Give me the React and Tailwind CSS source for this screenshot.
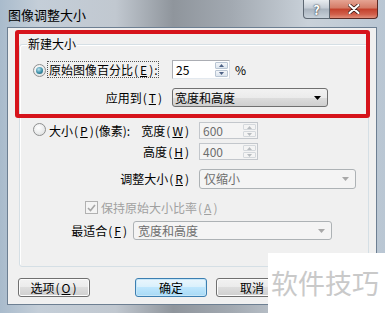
import React from "react";

function Radio({ checked }) {
  return (
    <span className="relative inline-flex w-[13px] h-[13px] shrink-0 rounded-full border border-[#8e8f8f] bg-[radial-gradient(circle_at_40%_35%,#ffffff,#d9dbdc)] items-center justify-center">
      {checked && (
        <span className="w-[7px] h-[7px] rounded-full bg-[radial-gradient(circle_at_40%_35%,#bfe3ef,#3b8fa8_55%,#1c5468)]" />
      )}
    </span>
  );
}

function Spinner({ disabled }) {
  const tri = disabled ? "#b8bcc0" : "#4d6185";
  return (
    <div className="flex flex-col w-[15px] h-full gap-[1px] p-[1px]">
      <div className={"flex-1 flex items-center justify-center rounded-[1px] border " + (disabled ? "border-[#d4d8dc] bg-[#f4f4f4]" : "border-[#b9c5d3] bg-[linear-gradient(#f3f6f9,#dde5ee)]")}>
        <svg width="5" height="3" viewBox="0 0 5 3"><path d="M0 3 L2.5 0 L5 3 Z" fill={tri} /></svg>
      </div>
      <div className={"flex-1 flex items-center justify-center rounded-[1px] border " + (disabled ? "border-[#d4d8dc] bg-[#f4f4f4]" : "border-[#b9c5d3] bg-[linear-gradient(#f3f6f9,#dde5ee)]")}>
        <svg width="5" height="3" viewBox="0 0 5 3"><path d="M0 0 L5 0 L2.5 3 Z" fill={tri} /></svg>
      </div>
    </div>
  );
}

function Arrow({ disabled }) {
  return (
    <svg width="7" height="4" viewBox="0 0 7 4">
      <path d="M0 0 L7 0 L3.5 4 Z" fill={disabled ? "#a8a8a8" : "#000"} />
    </svg>
  );
}

function K({ k }) {
  return (
    <>
      <span className="inline-block px-[1px]">(</span>
      <span className="inline-block px-[1px] underline underline-offset-1">{k}</span>
      <span className="inline-block px-[1px]">)</span>
    </>
  );
}

export default function App() {
  return (
    <div className="relative w-[385px] h-[313px] overflow-hidden font-['Noto_Sans_CJK_SC','Noto_Sans',sans-serif] text-[12px] leading-[14px] text-black bg-[linear-gradient(90deg,#a9bbcc_0%,#c4ced8_10%,#c1c8d0_30%,#8f959c_45%,#a2a9b1_60%,#c9d1d9_80%,#b9c6d3_100%)]">
      {/* title bar */}
      <div className="flex h-[27px]">
        <div className="pl-[8px] pt-[7px] text-[13px] leading-[16px] text-black">图像调整大小</div>
        <div className="flex-1" />
        <div className="flex items-start mr-[7px]">
          <div className="w-[27px] h-[19px] rounded-bl-[4px] border border-t-0 border-[#5d6772] bg-[linear-gradient(#e8ecf0,#c4ccd5_45%,#a9b3be_50%,#c8d1da)] flex items-center justify-center text-white font-bold text-[13px] leading-[13px] [text-shadow:0_0_2px_#39414a,0_0_1px_#39414a]">
            ?
          </div>
          <div className="w-[48px] h-[19px] rounded-br-[4px] border border-t-0 border-l-0 border-[#5a2a24] bg-[linear-gradient(#e5a493,#d47a66_45%,#c3402b_50%,#d1604b_80%,#e1907c)] flex items-center justify-center">
            <svg width="12" height="10" viewBox="0 0 12 10">
              <path d="M1.5 1 L10.5 9 M10.5 1 L1.5 9" stroke="#3b1a16" strokeWidth="3.6" strokeLinecap="round" />
              <path d="M1.5 1 L10.5 9 M10.5 1 L1.5 9" stroke="#ffffff" strokeWidth="2.2" strokeLinecap="round" />
            </svg>
          </div>
        </div>
      </div>

      {/* client area */}
      <div className="ml-[7px] w-[370px] h-[278px] border border-[#6d7f92] bg-[#f0f0f0]">
        {/* group box */}
        <div className="relative ml-[11px] mt-[16px] w-[350px] h-[223px] border border-[#d5dfe5] rounded-[3px] shadow-[inset_1px_1px_0_#ffffff]">
          <span className="absolute left-[7px] top-[-8px] px-[1px] bg-[#f0f0f0] leading-[14px]">新建大小</span>

          {/* row 1 */}
          <div className="flex items-center h-[19px] mt-[15px]">
            <span className="ml-[13px]"><Radio checked /></span>
            <span className="ml-[1px] w-[112px] h-[17px] border border-dotted border-[#555] pl-[1px] leading-[15px] whitespace-nowrap">
              原始图像百分比<K k="E" />:
            </span>
            <div className="ml-[13px] w-[58px] h-[19px] flex border border-[#abadb3] border-r-[#dbdfe6] border-b-[#e3e9ef] bg-white">
              <span className="flex-1 pl-[3px] leading-[17px]">25</span>
              <Spinner />
            </div>
            <span className="ml-[5px]">%</span>
          </div>

          {/* row 2 */}
          <div className="flex items-center h-[19px] mt-[9px]">
            <span className="w-[143px] text-right whitespace-nowrap">应用到<K k="T" /></span>
            <div className="ml-[9px] w-[156px] h-[19px] flex items-center rounded-[3px] border border-[#707070] bg-[linear-gradient(#f2f2f2_0%,#ebebeb_50%,#dddddd_50%,#cfcfcf_100%)] pl-[2px] pr-[6px]">
              <span className="flex-1 leading-[17px]">宽度和高度</span>
              <Arrow />
            </div>
          </div>

          {/* row 3 */}
          <div className="flex items-center h-[17px] mt-[15px]">
            <div className="w-[170px] flex items-center">
              <span className="ml-[13px]"><Radio /></span>
              <span className="ml-[3px] whitespace-nowrap">大小<K k="P" />(像素):</span>
              <span className="flex-1 text-right whitespace-nowrap">宽度<K k="W" /></span>
            </div>
            <div className="ml-[9px] w-[59px] h-[17px] flex border border-[#c3c7cc] bg-[#f4f4f4] text-[#6d6d6d]">
              <span className="flex-1 pl-[3px] leading-[15px]">600</span>
              <Spinner disabled />
            </div>
          </div>

          {/* row 4 */}
          <div className="flex items-center h-[17px] mt-[4px]">
            <span className="w-[170px] text-right whitespace-nowrap">高度<K k="H" /></span>
            <div className="ml-[9px] w-[59px] h-[17px] flex border border-[#c3c7cc] bg-[#f4f4f4] text-[#6d6d6d]">
              <span className="flex-1 pl-[3px] leading-[15px]">400</span>
              <Spinner disabled />
            </div>
          </div>

          {/* row 5 */}
          <div className="flex items-center h-[20px] mt-[9px]">
            <span className="w-[170px] text-right whitespace-nowrap">调整大小<K k="R" /></span>
            <div className="ml-[9px] w-[157px] h-[20px] flex items-center rounded-[3px] border border-[#adb2b5] bg-[#f4f4f4] pl-[4px] pr-[6px] text-[#6d6d6d]">
              <span className="flex-1 leading-[18px]">仅缩小</span>
              <Arrow disabled />
            </div>
          </div>

          {/* row 6 */}
          <div className="flex items-center h-[13px] mt-[12px]">
            <span className="ml-[65px] w-[13px] h-[13px] border border-[#b1b1b1] bg-[#f4f4f4] flex items-center justify-center">
              <svg width="9" height="8" viewBox="0 0 9 8">
                <path d="M1 4 L3.5 6.5 L8 1" stroke="#a6a6a6" strokeWidth="1.6" fill="none" />
              </svg>
            </span>
            <span className="ml-[3px] text-[#a0a0a0] whitespace-nowrap">保持原始大小比率<K k="A" /></span>
          </div>

          {/* row 7 */}
          <div className="flex items-center h-[19px] mt-[7px]">
            <span className="w-[108px] text-right whitespace-nowrap">最适合<K k="F" /></span>
            <div className="ml-[5px] w-[199px] h-[19px] flex items-center rounded-[3px] border border-[#adb2b5] bg-[#f4f4f4] pl-[4px] pr-[6px] text-[#6d6d6d]">
              <span className="flex-1 leading-[17px]">宽度和高度</span>
              <Arrow disabled />
            </div>
          </div>
        </div>

        {/* buttons */}
        <div className="flex mt-[11px]">
          <div className="ml-[10px] w-[72px] h-[19px] rounded-[3px] border border-[#707070] bg-[linear-gradient(#f2f2f2_0%,#ebebeb_50%,#dddddd_50%,#cfcfcf_100%)] flex items-center justify-center shadow-[inset_0_0_0_1px_#fcfcfc]">
            选项<K k="O" />
          </div>
          <div className="ml-[45px] w-[72px] h-[19px] rounded-[3px] border border-[#3c7fb1] bg-[linear-gradient(#eaf6fd_0%,#d9f0fc_50%,#bee6fd_50%,#a7d9f5_100%)] flex items-center justify-center shadow-[inset_0_0_0_1px_#c6e6f8]">
            确定
          </div>
          <div className="ml-[9px] w-[72px] h-[19px] rounded-[3px] border border-[#707070] bg-[linear-gradient(#f2f2f2_0%,#ebebeb_50%,#dddddd_50%,#cfcfcf_100%)] flex items-center justify-center shadow-[inset_0_0_0_1px_#fcfcfc]">
            取消
          </div>
        </div>
      </div>

      {/* red annotation */}
      <div className="absolute left-[15px] top-[30px] w-[355px] h-[88px] border-[4px] border-[#d6131b] rounded-[3px]" />

      {/* watermark */}
      <div className="absolute left-[268px] top-[253px] w-[117px] h-[60px] bg-white flex items-center pl-[3px]">
        <span className="text-[27px] leading-[32px] text-[#c9c9c9] tracking-[0px] whitespace-nowrap">软件技巧</span>
      </div>
    </div>
  );
}
